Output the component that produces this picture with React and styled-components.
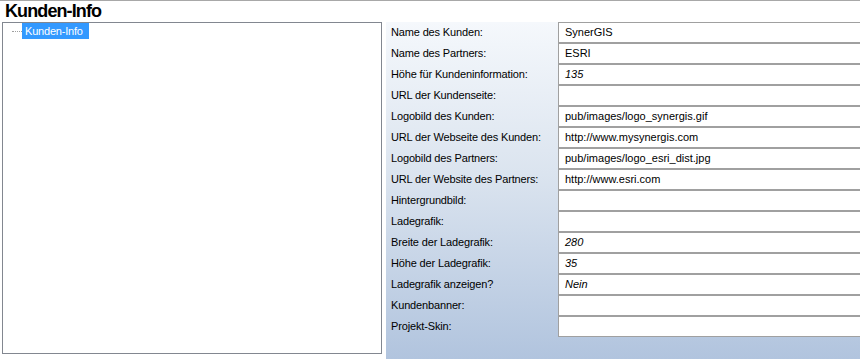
import React from 'react';
import styled, { createGlobalStyle } from 'styled-components';

const GlobalStyle = createGlobalStyle`
  html, body {
    margin: 0;
    padding: 0;
    background: #fff;
  }
  body {
    font-family: "Liberation Sans", Arial, sans-serif;
  }
`;

const Page = styled.div`
  display: flex;
  flex-direction: column;
  height: 100vh;
  box-sizing: border-box;
  border-top: 1px solid #a8a8a8;
  overflow: hidden;
`;

const Title = styled.h1`
  margin: 0;
  height: 21px;
  padding-left: 5px;
  font-size: 18px;
  font-weight: bold;
  line-height: 20px;
  letter-spacing: -0.9px;
  color: #000;
`;

const Body = styled.div`
  display: flex;
  flex: 1;
  min-height: 0;
`;

const TreePanel = styled.div`
  width: 380px;
  margin: 0 4px 5px 2px;
  box-sizing: border-box;
  border: 1px solid #828790;
  background: #fff;
`;

const TreeNode = styled.div`
  display: flex;
  align-items: center;
  height: 16px;
  padding-left: 9px;
`;

const Connector = styled.span`
  width: 10px;
  border-top: 1px dotted #a0a0a0;
`;

const NodeLabel = styled.span`
  padding: 0 6px 0 3px;
  height: 16px;
  line-height: 16px;
  font-size: 11px;
  letter-spacing: -0.2px;
  color: #fff;
  background: ${({ selected }) => (selected ? '#3399ff' : 'transparent')};
`;

const FormPanel = styled.div`
  flex: 1;
  display: grid;
  grid-template-columns: 172px 1fr;
  align-content: start;
  background: linear-gradient(to bottom, #f5f8fc 0%, #dbe4ef 45%, #b1c4de 100%);
`;

const Label = styled.div`
  height: 21px;
  line-height: 21px;
  padding-left: 5px;
  font-size: 11px;
  letter-spacing: -0.15px;
  color: #000;
  white-space: nowrap;
`;

const Field = styled.div`
  height: 21px;
  box-sizing: border-box;
  border: 1px solid #a0a0a0;
  border-right: none;
  background: #fff;
  padding-left: 6px;
  line-height: 19px;
  font-size: 11px;
  font-style: ${({ inherited }) => (inherited ? 'italic' : 'normal')};
  color: #000;
  white-space: nowrap;
`;

const rows = [
  { label: 'Name des Kunden:', value: 'SynerGIS' },
  { label: 'Name des Partners:', value: 'ESRI' },
  { label: 'Höhe für Kundeninformation:', value: '135', inherited: true },
  { label: 'URL der Kundenseite:', value: '' },
  { label: 'Logobild des Kunden:', value: 'pub/images/logo_synergis.gif' },
  { label: 'URL der Webseite des Kunden:', value: 'http://www.mysynergis.com' },
  { label: 'Logobild des Partners:', value: 'pub/images/logo_esri_dist.jpg' },
  { label: 'URL der Website des Partners:', value: 'http://www.esri.com' },
  { label: 'Hintergrundbild:', value: '' },
  { label: 'Ladegrafik:', value: '' },
  { label: 'Breite der Ladegrafik:', value: '280', inherited: true },
  { label: 'Höhe der Ladegrafik:', value: '35', inherited: true },
  { label: 'Ladegrafik anzeigen?', value: 'Nein', inherited: true },
  { label: 'Kundenbanner:', value: '' },
  { label: 'Projekt-Skin:', value: '' },
];

function App() {
  return (
    <>
      <GlobalStyle />
      <Page>
        <Title>Kunden-Info</Title>
        <Body>
          <TreePanel>
            <TreeNode>
              <Connector />
              <NodeLabel selected>Kunden-Info</NodeLabel>
            </TreeNode>
          </TreePanel>
          <FormPanel>
            {rows.map((row) => (
              <React.Fragment key={row.label}>
                <Label>{row.label}</Label>
                <Field inherited={row.inherited}>{row.value}</Field>
              </React.Fragment>
            ))}
          </FormPanel>
        </Body>
      </Page>
    </>
  );
}

export default App;
